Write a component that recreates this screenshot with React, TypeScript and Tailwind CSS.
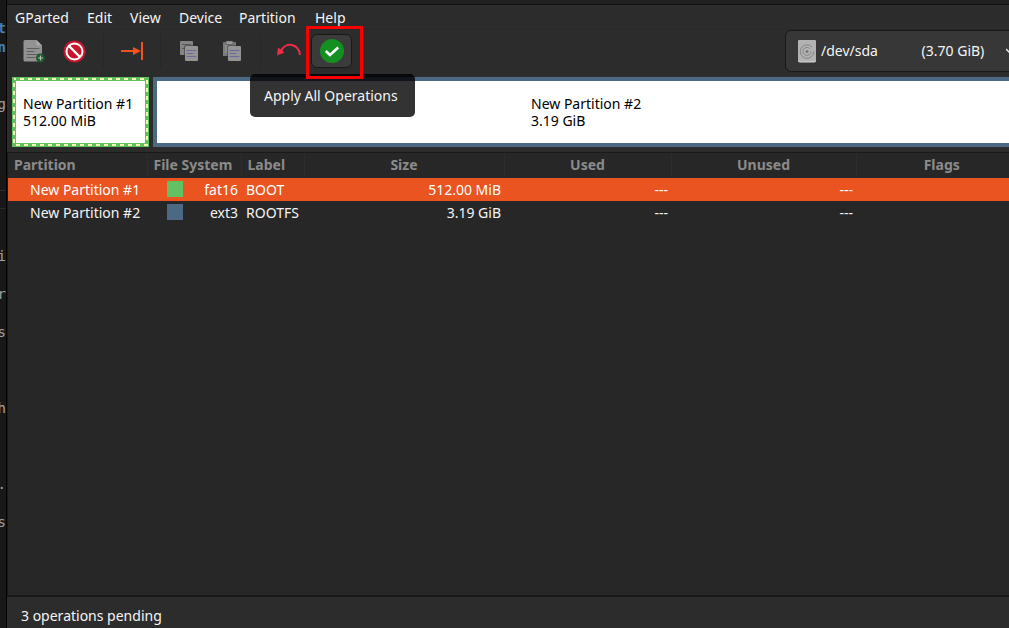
import type { ReactNode } from "react";

const menus = [
  { label: "GParted", width: "w-[72px]" },
  { label: "Edit", width: "w-[43px]" },
  { label: "View", width: "w-[49px]" },
  { label: "Device", width: "w-[60px]" },
  { label: "Partition", width: "w-[76px]" },
  { label: "Help", width: "w-[46px]" },
];

const terminalLines = [
  "t", "n", "", "", "g", "", "", "", "", "", "", "", "i", "", "r", "", "s",
  "", "", "", "h", "", "", "", ".", "", "s",
];

const partitions = [
  { name: "New Partition #1", fs: "fat16", swatch: "bg-[#62c162]", label: "BOOT", size: "512.00 MiB", selected: true },
  { name: "New Partition #2", fs: "ext3", swatch: "bg-[#4b6983]", label: "ROOTFS", size: "3.19 GiB", selected: false },
];

const columns = [
  { title: "Partition", width: "w-[139px]", align: "text-left pl-1.5" },
  { title: "File System", width: "w-[94px]", align: "text-left pl-1.5" },
  { title: "Label", width: "w-[63px]", align: "text-left pl-1.5" },
  { title: "Size", width: "w-[200px]", align: "text-center" },
  { title: "Used", width: "w-[167px]", align: "text-center" },
  { title: "Unused", width: "w-[185px]", align: "text-center" },
  { title: "Flags", width: "", align: "text-center" },
];

function ToolButton({ label, children, active = false }: { label: string; children: ReactNode; active?: boolean }) {
  return (
    <button
      type="button"
      aria-label={label}
      className={
        active
          ? "flex h-[34px] w-[41px] items-center justify-center rounded-md border border-[#191919] bg-[#3b3b3b]"
          : "flex h-[34px] w-[41px] items-center justify-center rounded-md"
      }
    >
      {children}
    </button>
  );
}

function Separator() {
  return (
    <div className="flex h-[34px] w-4 justify-center">
      <div className="w-px bg-[#272727]" />
    </div>
  );
}

function NewIcon() {
  return (
    <svg width="24" height="24" viewBox="0 0 24 24" aria-hidden="true">
      <path d="M3 1h11.5L20 6.500V21a1.500 1.500 0 0 1-1.500 1.500H3A1.500 1.500 0 0 1 1.500 21V2.500A1.500 1.500 0 0 1 3 1z" fill="#929292" />
      <path d="M14.500 1v4A1.500 1.500 0 0 0 16 6.500h4z" fill="#aaaaaa" />
      <path d="M5 9.500h12M5 12.500h7M5 15.500h12M5 18.500h8" stroke="#5f5f5f" strokeLinecap="round" />
      <circle cx="18.500" cy="19" r="4.500" fill="#1d5a2b" />
      <path d="M18.500 16.500v5M16 19h5" stroke="#b5bfb7" strokeWidth="1.200" />
    </svg>
  );
}

function DeleteIcon() {
  return (
    <svg width="24" height="24" viewBox="0 0 24 24" aria-hidden="true">
      <circle cx="11.500" cy="12.500" r="11" fill="#c6162b" />
      <circle cx="11.500" cy="12.500" r="8" fill="none" stroke="#fff" strokeWidth="2" />
      <path d="M6 7l11 11" stroke="#fff" strokeWidth="2.400" />
    </svg>
  );
}

function ResizeIcon() {
  return (
    <svg width="24" height="24" viewBox="0 0 24 24" aria-hidden="true">
      <path d="M1 12h14" stroke="#f4511b" strokeWidth="2" />
      <path d="M13 8l8 4-8 4z" fill="#f4511b" />
      <path d="M22 3v18" stroke="#f4511b" strokeWidth="2" />
    </svg>
  );
}

function CopyIcon() {
  return (
    <svg width="24" height="24" viewBox="0 0 24 24" aria-hidden="true">
      <rect x="3" y="2" width="13" height="14" rx="1" fill="#848484" />
      <path d="M5 5.500h9M5 9.500h5" stroke="#5c5c5c" />
      <rect x="7.500" y="6.500" width="14" height="16" rx="1" fill="#2c2c2c" />
      <rect x="8" y="7" width="13" height="15" rx="1" fill="#949494" />
      <path d="M10 11.500h9M10 14.500h6M10 17.500h9" stroke="#6668a0" strokeLinecap="round" />
    </svg>
  );
}

function PasteIcon() {
  return (
    <svg width="24" height="24" viewBox="0 0 24 24" aria-hidden="true">
      <path d="M4 3h11a1 1 0 0 1 1 1v13H3V4a1 1 0 0 1 1-1z" fill="#7b7b7b" />
      <path d="M5 5h9v9H5z" fill="#8e8e8e" />
      <path d="M6 2h7v3.500H6z" fill="#9c9c9c" stroke="#444" strokeWidth=".6" />
      <rect x="7.500" y="6.500" width="14" height="16" rx="1" fill="#2c2c2c" />
      <rect x="8" y="7" width="13" height="15" rx="1" fill="#949494" />
      <path d="M10 11.500h9M10 14.500h6M10 17.500h9" stroke="#6668a0" strokeLinecap="round" />
    </svg>
  );
}

function UndoIcon() {
  return (
    <svg width="24" height="24" viewBox="0 0 24 24" aria-hidden="true">
      <path d="M4 12C8 3 21.500 3.500 23 16" fill="none" stroke="#f02d48" strokeWidth="2" />
      <path d="M1 8.500L0 16.500l7.500-3z" fill="#f02d48" />
    </svg>
  );
}

function ApplyIcon() {
  return (
    <svg width="24" height="24" viewBox="0 0 24 24" aria-hidden="true">
      <circle cx="12" cy="12" r="12" fill="#149023" />
      <path d="M5.800 12l4.200 4 8.200-7.500" fill="none" stroke="#fff" strokeWidth="2.500" />
    </svg>
  );
}

function DiskIcon() {
  return (
    <svg width="20" height="24" viewBox="0 0 20 24" aria-hidden="true">
      <rect x="1" y="1" width="18" height="22.500" rx="1.800" fill="#dadada" />
      <rect x="1" y="1" width="18" height="21.500" rx="1.800" fill="#b3b3b3" />
      <path d="M15 8a6.800 6.800 0 1 0 1.800 4.500M12.700 9.500a4 4 0 1 0 1.300 3" fill="none" stroke="#858585" />
      <circle cx="10" cy="12.500" r="1.500" fill="#777" />
    </svg>
  );
}

function SelectionFrame() {
  return (
    <svg className="pointer-events-none absolute inset-0 size-full" viewBox="0 0 137 70" preserveAspectRatio="none" aria-hidden="true">
      <rect x="2" y="2" width="133" height="66" fill="none" stroke="#f5f7b5" strokeWidth="2" strokeDasharray="4 4" strokeDashoffset="2" />
    </svg>
  );
}

export default function App() {
  return (
    <div className="flex h-screen overflow-hidden bg-[#2c2c2c] font-['Noto_Sans',sans-serif] text-sm text-[#f5f5f5]">
      <div
        aria-hidden="true"
        className="flex w-[7px] shrink-0 flex-col overflow-hidden border-r border-black bg-[#181818] pt-[19px] font-['DejaVu_Sans_Mono',monospace] text-sm leading-[19px] text-[#a0a0a0]"
      >
        {terminalLines.map((char, i) => (
          <div
            key={i}
            className={
              i < 2
                ? "flex h-[19px] shrink-0 justify-end font-bold text-[#4580b5]"
                : i === 4
                  ? "flex h-[19px] shrink-0 justify-end underline"
                  : i === 9
                    ? "h-[19px] shrink-0 border-y border-[#2b2b2b]"
                    : "flex h-[19px] shrink-0 justify-end"
            }
          >
            {char}
          </div>
        ))}
      </div>

      <div className="flex min-w-0 flex-1 flex-col overflow-hidden">
        <div className="h-[5px] shrink-0 border-b border-[#111] bg-[#202020]" />
        <nav className="flex h-[25px] shrink-0 border-b border-[#292929] pt-0.5">
          {menus.map((menu) => (
            <button key={menu.label} type="button" className={`${menu.width} pl-2 text-left whitespace-nowrap`}>
              {menu.label}
            </button>
          ))}
        </nav>

        <div className="flex h-[47px] shrink-0 pl-1.5">
          <div className="flex pt-1">
            <ToolButton label="New"><NewIcon /></ToolButton>
            <ToolButton label="Delete"><DeleteIcon /></ToolButton>
            <Separator />
            <ToolButton label="Resize/Move"><ResizeIcon /></ToolButton>
            <Separator />
            <div className="flex gap-0.5">
              <ToolButton label="Copy"><CopyIcon /></ToolButton>
              <ToolButton label="Paste"><PasteIcon /></ToolButton>
            </div>
            <Separator />
            <div className="flex gap-0.5">
              <ToolButton label="Undo"><UndoIcon /></ToolButton>
              <div className="relative h-[34px]">
                <ToolButton label="Apply" active><ApplyIcon /></ToolButton>
                <div role="tooltip" className="absolute top-10 -left-[61px] z-10 flex h-[43px] w-[165px] items-center rounded-[5px] bg-black/80 pl-3.5 whitespace-nowrap">
                  Apply All Operations
                </div>
                <div className="pointer-events-none absolute -top-2 -left-[5px] z-20 h-[53px] w-[57px] border-[3px] border-[#f80000]" />
              </div>
            </div>
          </div>
          <div className="-mr-2.5 ml-auto flex h-[42px] w-[234px] items-center rounded-md border border-[#191919] bg-[#373737] pl-[11px]">
            <DiskIcon />
            <select aria-label="Device" className="h-full flex-1 appearance-none bg-transparent pl-1 outline-none">
              <option>{"/dev/sda" + "\u00a0".repeat(12) + "(3.70 GiB)"}</option>
            </select>
            <svg className="mr-1 shrink-0" width="8" height="8" viewBox="0 0 8 8" aria-hidden="true">
              <path d="M0 2l4 4 4-4" fill="none" stroke="#e8e8e8" strokeWidth="1.500" />
            </svg>
          </div>
        </div>

        <div className="flex h-[70px] shrink-0 gap-1 pl-[5px] leading-[17px] text-black">
          <div className="relative w-[137px] bg-[#5fc05f] p-1">
            <div className="flex h-full flex-col justify-center bg-white pl-[7px] whitespace-nowrap">
              <span>New Partition #1</span>
              <span>512.00 MiB</span>
            </div>
            <SelectionFrame />
          </div>
          <div className="-mr-3.5 flex flex-1 items-center justify-center border-4 border-[#4b6983] bg-white">
            <div className="flex w-[114px] flex-col whitespace-nowrap">
              <span>New Partition #2</span>
              <span>3.19 GiB</span>
            </div>
          </div>
        </div>

        <main className="mt-[5px] flex-1 overflow-hidden border-t border-l border-[#191919] bg-[#272727]">
          <table className="w-[calc(100%+19px)] table-fixed border-collapse">
            <thead>
              <tr className="h-[25px] text-[#8b8b8b]">
                {columns.map((col) => (
                  <th key={col.title} className={`${col.width} ${col.align} border-r border-[#2d2d2d] p-0 pb-0.5 leading-5 font-bold whitespace-nowrap`}>
                    {col.title}
                  </th>
                ))}
              </tr>
            </thead>
            <tbody>
              {partitions.map((p) => (
                <tr key={p.name} className={p.selected ? "h-[23px] bg-[#e95420] text-white" : "h-[23px]"}>
                  <td className="p-0 pl-[22px] whitespace-nowrap">{p.name}</td>
                  <td className="p-0">
                    <div className="flex items-start justify-between pr-[3px] pl-5">
                      <span className={`mt-px size-4 ${p.swatch}`} />
                      <span>{p.fs}</span>
                    </div>
                  </td>
                  <td className="p-0 pl-[5px]">{p.label}</td>
                  <td className="p-0 pr-[3px] text-right">{p.size}</td>
                  <td className="p-0 pr-[3px] text-right">---</td>
                  <td className="p-0 pr-[3px] text-right">---</td>
                  <td className="p-0" />
                </tr>
              ))}
            </tbody>
          </table>
        </main>

        <footer className="flex h-[33px] shrink-0 items-center border-t-2 border-[#191919] pt-1.5 pl-3.5">
          3 operations pending
        </footer>
      </div>
    </div>
  );
}
